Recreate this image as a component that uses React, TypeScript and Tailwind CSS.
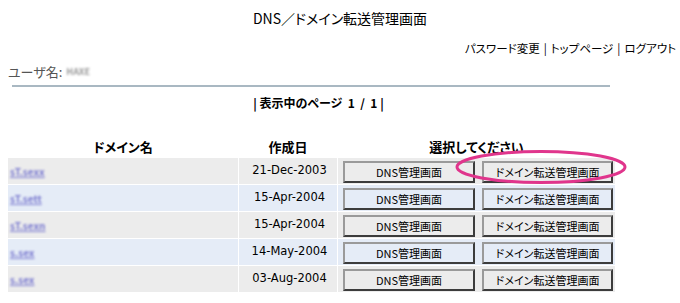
import React from "react";

const rows = [
  { d: "sT.sexx", date: "21-Dec-2003", blue: false },
  { d: "sT.sett", date: "15-Apr-2004", blue: true },
  { d: "sT.sexn", date: "15-Apr-2004", blue: false },
  { d: "s.sex", date: "14-May-2004", blue: true },
  { d: "s.sex", date: "03-Aug-2004", blue: false },
];

function Btn({ label, blue }: { label: string; blue: boolean }) {
  return (
    <div
      className={`flex h-[22px] items-center justify-center border-2 border-t-[#9a9a9a] border-l-[#9a9a9a] border-r-[#3c3c3c] border-b-[#3c3c3c] text-[11px] text-black ${
        blue ? "bg-[#e5ecf7]" : "bg-[#ececec]"
      }`}
    >
      {label}
    </div>
  );
}

export default function App() {
  return (
    <div
      className="relative h-[303px] w-[680px] overflow-hidden bg-white text-black [font-feature-settings:'palt']"
      style={{ fontFamily: '"Noto Sans CJK JP", "Noto Sans", sans-serif' }}
    >
      <div className="mt-[9px] h-[18px] text-center text-[14px] leading-[18px]">
        DNS／ドメイン転送管理画面
      </div>
      <div className="mt-[13px] flex h-[16px] justify-end pr-[4px] text-[11.5px] leading-[16px]">
        <span>パスワード変更</span>
        <span className="mx-[4px]">|</span>
        <span>トップページ</span>
        <span className="mx-[4px]">|</span>
        <span>ログアウト</span>
      </div>
      <div className="mt-[8px] flex h-[16px] items-center pl-[8px] text-[13px] leading-[16px] text-[#555]">
        <span>ユーザ名:</span>
        <span className="ml-[4px] inline-block text-[9px] font-bold text-[#999] blur-[0.8px]">HAXE</span>
      </div>
      <div className="ml-[12px] mt-[5px] h-[2px] w-[598px] bg-[#a9b8c2]" />
      <div className="mt-[8px] w-[607px] pl-[30px] text-center text-[12px] font-bold leading-[16px]">
        | 表示中のページ&nbsp; 1&nbsp; /&nbsp; 1 |
      </div>
      <div className="ml-[8px] mt-[25px] flex h-[22px] items-center gap-[1px] text-[13px] font-bold">
        <div className="w-[230px] text-center">ドメイン名</div>
        <div className="w-[98px] text-center">作成日</div>
        <div className="w-[277px] text-center">選択してください</div>
      </div>
      <div className="ml-[8px] flex flex-col gap-[1px]">
        {rows.map((r, i) => (
          <div key={i} className="flex h-[26px] gap-[1px]">
            <div
              className={`flex w-[230px] items-center pl-[2px] ${
                r.blue ? "bg-[#e5ecf7]" : "bg-[#ececec]"
              }`}
            >
              <span className="inline-block text-[10px] font-bold text-[#7b7bd0] underline blur-[0.8px]">
                {r.d}
              </span>
            </div>
            <div
              className={`flex w-[98px] items-center justify-center pl-[3px] text-[11.5px] ${
                r.blue ? "bg-[#e5ecf7]" : "bg-[#ececec]"
              }`}
              style={{ fontFamily: '"DejaVu Sans", Verdana, sans-serif' }}
            >
              {r.date}
            </div>
            <div
              className={`flex w-[277px] gap-[7px] pl-[5px] pt-[3px] ${
                r.blue ? "bg-[#e5ecf7]" : "bg-[#ececec]"
              }`}
            >
              <div className="w-[132px]">
                <Btn label="DNS管理画面" blue={r.blue} />
              </div>
              <div className="w-[131px]">
                <Btn label="ドメイン転送管理画面" blue={r.blue} />
              </div>
            </div>
          </div>
        ))}
      </div>
      <svg
        className="pointer-events-none absolute left-0 top-0"
        width="680"
        height="303"
        viewBox="0 0 680 303"
      >
        <ellipse
          cx="541"
          cy="167"
          rx="84"
          ry="15.5"
          fill="none"
          stroke="#e0358c"
          strokeWidth="3"
        />
      </svg>
    </div>
  );
}
